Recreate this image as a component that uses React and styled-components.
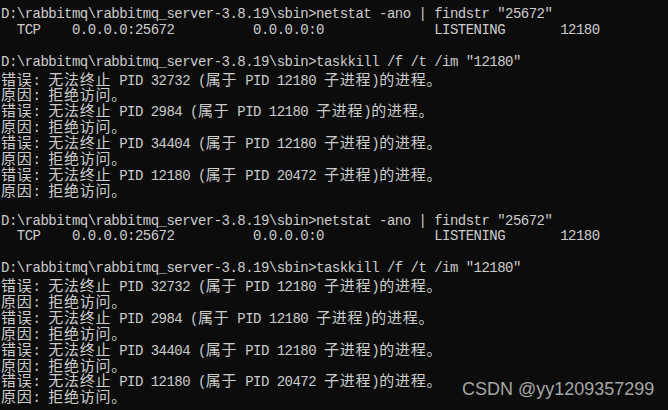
import React from 'react';
import styled, { createGlobalStyle } from 'styled-components';

const GlobalStyle = createGlobalStyle`
  html, body {
    margin: 0;
    padding: 0;
    background: #0c0c0c;
  }
`;

const PROMPT = 'D:\\rabbitmq\\rabbitmq_server-3.8.19\\sbin>';

const block = [
  PROMPT + 'netstat -ano | findstr "25672"',
  '  TCP    0.0.0.0:25672          0.0.0.0:0              LISTENING       12180',
  '',
  PROMPT + 'taskkill /f /t /im "12180"',
  '错误: 无法终止 PID 32732 (属于 PID 12180 子进程)的进程。',
  '原因: 拒绝访问。',
  '错误: 无法终止 PID 2984 (属于 PID 12180 子进程)的进程。',
  '原因: 拒绝访问。',
  '错误: 无法终止 PID 34404 (属于 PID 12180 子进程)的进程。',
  '原因: 拒绝访问。',
  '错误: 无法终止 PID 12180 (属于 PID 20472 子进程)的进程。',
  '原因: 拒绝访问。',
  '',
];

const lines = [...block, ...block.slice(0, 12)];

// split a line into runs of half-width and full-width characters
const splitRuns = (text) => {
  const runs = [];
  for (const ch of text) {
    const wide = ch.charCodeAt(0) > 0x2e80;
    const last = runs[runs.length - 1];
    if (last && last.wide === wide) last.text += ch;
    else runs.push({ wide, text: ch });
  }
  return runs;
};

const Console = styled.div`
  position: relative;
  width: 668px;
  height: 410px;
  overflow: hidden;
  background: #0c0c0c;
  color: #cccccc;
  padding: 7px 0 0 1px;
  box-sizing: border-box;
  font-family: "Liberation Mono", "Noto Sans CJK SC", monospace;
  font-size: 14px;
  letter-spacing: -0.525px;
`;

const Line = styled.div`
  height: 15.9px;
  line-height: 15.9px;
  white-space: pre;
`;

const Wide = styled.span`
  font-family: "Noto Sans CJK SC", sans-serif;
  font-size: 15px;
  letter-spacing: 0.75px;
  line-height: 15.9px;
`;

const Watermark = styled.div`
  position: absolute;
  left: 462px;
  top: 377px;
  font-family: "Liberation Sans", Arial, sans-serif;
  font-size: 18px;
  letter-spacing: 0;
  line-height: 24px;
  color: #a5a5a5;
  white-space: nowrap;
`;

export default function App() {
  return (
    <>
      <GlobalStyle />
      <Console>
        {lines.map((text, i) => (
          <Line key={i}>
            {splitRuns(text).map((run, j) =>
              run.wide ? <Wide key={j}>{run.text}</Wide> : <span key={j}>{run.text}</span>
            )}
          </Line>
        ))}
        <Watermark>CSDN @yy1209357299</Watermark>
      </Console>
    </>
  );
}
